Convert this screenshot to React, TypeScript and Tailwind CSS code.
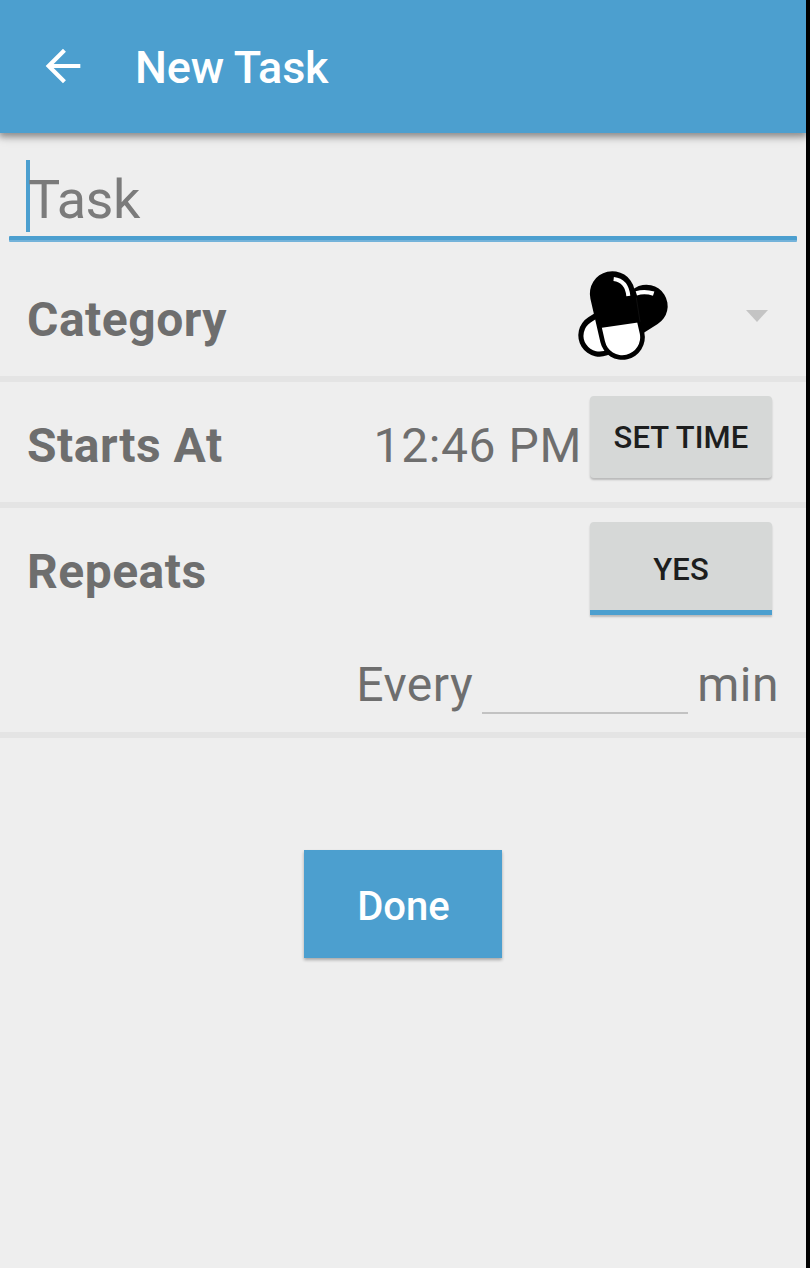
import type { ReactNode } from 'react'

function BackArrow() {
  return (
    <svg viewBox="0 0 24 24" className="-mt-[1px] h-[52px] w-[52px] fill-white">
      <path d="M20 11.05H7.7l5.65-5.6L12 4l-8 8 8 8 1.35-1.4-5.65-5.65H20z" />
    </svg>
  )
}

function Pills() {
  return (
    <svg viewBox="54 33 270 267" className="h-[89px] w-[90px] overflow-visible">
      <defs>
        <clipPath id="frontHalf">
          <path d="M100 207 L270 182 V310 H100z" />
        </clipPath>
      </defs>
      <g fill="none" strokeLinecap="round">
        <path d="M259 138 L119 226" stroke="#000" strokeWidth="128" />
        <path d="M150 206 L118 227" stroke="#fff" strokeWidth="95" />
        <path d="M157 101 L187 232" stroke="#000" strokeWidth="135" />
        <path d="M157 101 L187 232" stroke="#fff" strokeWidth="107" clipPath="url(#frontHalf)" />
        <path d="M229 114 L240 184" stroke="#161616" strokeWidth="2" />
        <g stroke="#fff" strokeLinecap="butt">
          <path d="M161 57 C187 60 202 78 205 108" strokeWidth="12" />
          <path d="M229 100 Q254 92 281 101" strokeWidth="13" />
        </g>
      </g>
    </svg>
  )
}

function Label({ children }: { children: ReactNode }) {
  return <span className="text-[48px] leading-[56px] font-bold tracking-[0.5px]">{children}</span>
}

export default function App() {
  return (
    <div className="flex h-[1268px] w-[810px] bg-black font-['Roboto',sans-serif] whitespace-nowrap text-[#6e6e6e]">
      <div className="flex w-[806px] flex-col overflow-hidden bg-[#eeeeee]">
        <header className="flex h-[133px] shrink-0 items-center bg-[#4c9fcf] pl-[37px] shadow-[0_3px_6px_1px_rgba(0,0,0,0.32),0_5px_10px_rgba(0,0,0,0.12)]">
          <BackArrow />
          <h1 className="pt-[2px] pl-[46px] text-[45px] leading-[54px] font-medium tracking-[-0.2px] text-white">New Task</h1>
        </header>

        <div className="mt-[27px] mr-[9px] ml-[9px] flex h-[82px] shrink-0 flex-col justify-between">
          <div className="ml-[17px] flex h-[72px] items-center border-l-4 border-[#4c9fcf]">
            <span className="-ml-[2px] pt-[7px] text-[54px] leading-[64px] tracking-[-0.5px] text-[#7b7b7b]">Task</span>
          </div>
          <div className="h-[6px] rounded-[1px] border-b-2 border-[#74b3da] bg-[#4c9fcf]" />
        </div>

        <section className="flex h-[140px] shrink-0 border-b-[6px] border-[#e4e4e4] pl-[27px]">
          <div className="w-[551px] pt-[50px]">
            <Label>Category</Label>
          </div>
          <div className="pt-[29px]">
            <Pills />
          </div>
          <svg viewBox="0 0 22 12" className="mt-[68px] ml-[78px] h-[12px] w-[22px] fill-[#c4c4c4]">
            <path d="M0 0H22L11 12z" />
          </svg>
        </section>

        <section className="flex h-[126px] shrink-0 border-b-[6px] border-[#e4e4e4] pr-[34px] pl-[27px]">
          <div className="flex-1 pt-[36px]">
            <Label>Starts At</Label>
          </div>
          <span className="pt-[36px] pr-[8px] text-[48px] leading-[56px] tracking-[0.6px]">12:46 PM</span>
          <button className="mt-[14px] flex h-[82px] w-[182px] items-center justify-center rounded-[4px] bg-[#d6d8d7] pt-[2px] text-[31px] font-medium tracking-[0.1px] text-[#1d1e1e] shadow-[0_2px_2px_rgba(0,0,0,0.22)]">
            SET TIME
          </button>
        </section>

        <section className="flex h-[230px] shrink-0 flex-col border-b-[6px] border-[#e4e4e4]">
          <div className="flex h-[108px] pr-[34px] pl-[27px]">
            <div className="flex-1 pt-[36px]">
              <Label>Repeats</Label>
            </div>
            <button className="mt-[14px] flex h-[93px] w-[182px] items-center justify-center rounded-t-[4px] border-b-[5px] border-[#4c9fcf] bg-[#d6d8d7] pt-[9px] text-[31px] font-medium tracking-[0.1px] text-[#1d1e1e] shadow-[0_2px_2px_rgba(0,0,0,0.22)]">
              YES
            </button>
          </div>
          <div className="flex justify-end pt-[41px] pr-[27px] text-[48px] leading-[56px] tracking-[0.5px]">
            <span>Every</span>
            <div className="mr-[9px] ml-[9px] h-[57px] w-[206px] border-b-2 border-[#c2c2c2]" />
            <span>min</span>
          </div>
        </section>

        <button className="mt-[112px] flex h-[108px] w-[198px] shrink-0 items-center justify-center self-center bg-[#4c9fcf] pt-[6px] pl-[1px] text-[40px] font-medium text-white shadow-[0_2px_3px_rgba(0,0,0,0.3)]">
          Done
        </button>
      </div>
    </div>
  )
}
